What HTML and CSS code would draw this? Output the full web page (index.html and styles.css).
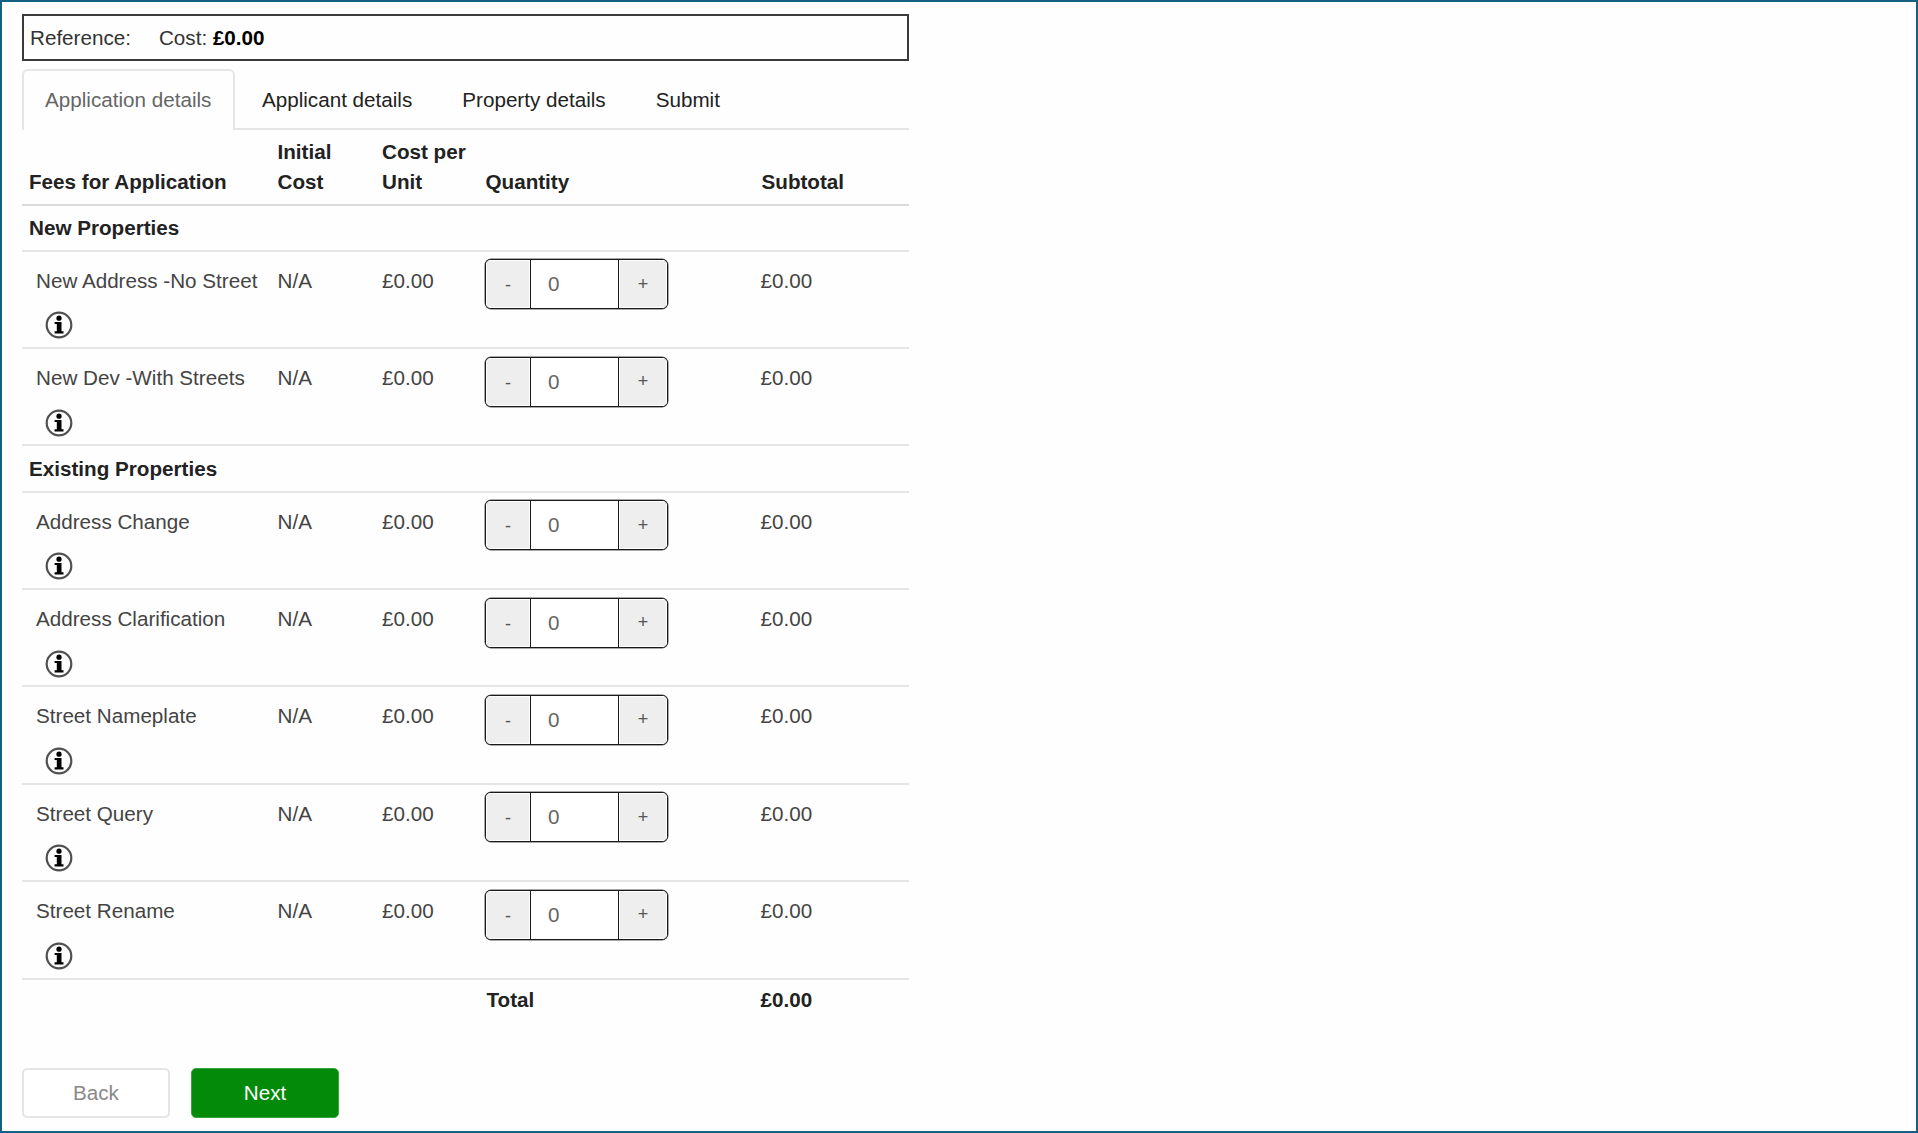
FILE: index.html
```html
<!DOCTYPE html>
<html lang="en">
<head>
  <meta charset="UTF-8" />
  <meta name="viewport" content="width=device-width, initial-scale=1.0" />
  <title>Application details</title>
  <link rel="stylesheet" href="styles.css">
</head>
<body>
  <div class="page">
    <div class="summary">
      <span class="reference">Reference:</span>
      <span>Cost: <strong>£0.00</strong></span>
    </div>

    <nav class="tabs">
      <a class="tab active">Application details</a>
      <a class="tab">Applicant details</a>
      <a class="tab">Property details</a>
      <a class="tab">Submit</a>
    </nav>

    <div class="fees">
      <div class="row head">
        <div>Fees for Application</div>
        <div>Initial<br>Cost</div>
        <div>Cost per<br>Unit</div>
        <div>Quantity</div>
        <div class="subtotal">Subtotal</div>
      </div>
      <div class="group">New Properties</div>
      <div id="newRows"></div>
      <div class="group">Existing Properties</div>
      <div id="existingRows"></div>
      <div class="row total">
        <div></div>
        <div></div>
        <div></div>
        <div class="label">Total</div>
        <div>£0.00</div>
      </div>
    </div>

    <div class="buttons">
      <button class="btn back">Back</button>
      <button class="btn next">Next</button>
    </div>
  </div>

  <script>
    const newItems = ['New Address -No Street', 'New Dev -With Streets'];
    const existingItems = ['Address Change', 'Address Clarification', 'Street Nameplate', 'Street Query', 'Street Rename'];

    function feeRow(name) {
      return `
        <div class="row item">
          <div class="name">
            ${name}
            <svg class="info" viewBox="0 0 28 28">
              <circle cx="14" cy="14" r="12.3" fill="none" stroke="#505050" stroke-width="2.2" />
              <circle cx="14" cy="7.2" r="2.6" />
              <path d="M9.6 10.9h6.9v9.3h2v2.2H9.6v-2.2h2.2v-7.1H9.6z" />
            </svg>
          </div>
          <div>N/A</div>
          <div>£0.00</div>
          <div class="stepper">
            <button class="minus">-</button>
            <input type="text" value="0">
            <button class="plus">+</button>
          </div>
          <div>£0.00</div>
        </div>`;
    }

    document.getElementById('newRows').innerHTML = newItems.map(feeRow).join('');
    document.getElementById('existingRows').innerHTML = existingItems.map(feeRow).join('');
  </script>
</body>
</html>
```
FILE: styles.css
```css
* {
  box-sizing: border-box;
}

body {
  margin: 0;
  font-family: Arial, 'Liberation Sans', sans-serif;
  font-size: 20.65px;
  line-height: 30px;
  color: #444;
}

button,
input {
  font-family: inherit;
  font-size: inherit;
  margin: 0;
}

.page {
  height: 1133px;
  border: 2px solid #156082;
  background: #fefefe;
  padding: 12px 20px 0;
}

.summary,
.tabs,
.fees {
  width: 887px;
}

.summary {
  display: flex;
  gap: 28px;
  height: 47px;
  padding: 7px 6px 0;
  border: 2px solid #3a3a3a;
  color: #333;
}

.summary strong {
  color: #000;
}

.tabs {
  display: flex;
  gap: 3px;
  height: 61px;
  margin-top: 8px;
  border-bottom: 2px solid #e5e5e5;
}

.tab {
  height: 61px;
  padding: 14px 21.5px 0;
  border: 2px solid transparent;
  border-bottom: 0;
  color: #222;
}

.tab.active {
  background: #fefefe;
  border-color: #e5e5e5;
  border-radius: 6px 6px 0 0;
  padding: 14px 22.1px 0 21px;
  color: #666;
}

.row {
  display: grid;
  grid-template-columns: 255.5px 104.5px 103.5px 275px 1fr;
  border-bottom: 2px solid #e5e5e5;
}

.head {
  height: 75.5px;
  padding-top: 6.5px;
  align-items: end;
  padding-bottom: 7px;
  border-bottom-color: #dadada;
  font-weight: bold;
  color: #222;
}

.head > div:first-child {
  padding-left: 7px;
}

.head .subtotal {
  padding-left: 1px;
}

.group {
  height: 46.2px;
  padding: 7.5px 7px 0;
  border-bottom: 2px solid #e5e5e5;
  font-weight: bold;
  color: #222;
}

.item {
  height: 97.4px;
  padding-top: 14px;
}

.name {
  padding-left: 14px;
}

.info {
  display: block;
  width: 28px;
  height: 28px;
  margin: 15.5px 0 0 8.5px;
}

.stepper {
  display: flex;
  width: 183px;
  height: 50px;
  margin: -6.5px 0 0 -0.5px;
  border: 1.5px solid #1a1a1a;
  border-radius: 6px;
  overflow: hidden;
  background: #fff;
  box-shadow: 0 0 0 0.5px #555;
}

.stepper button {
  border: 1px solid #fff;
  background: #eee;
  font-size: 18px;
  color: #555;
  padding: 0;
}

.stepper .minus {
  width: 44px;
  padding-top: 3px;
}

.plus {
  flex: 1;
}

.stepper input {
  width: 89px;
  padding: 0 0 0 17px;
  border: 0 solid #1a1a1a;
  border-width: 0 1px;
  color: #666;
}

.total {
  border-bottom: 0;
  padding-top: 5.2px;
  height: 88.3px;
  font-weight: bold;
  color: #222;
}

.total .label {
  padding-left: 1px;
}

.buttons {
  display: flex;
  gap: 21px;
}

.btn {
  width: 148px;
  height: 50px;
  border-radius: 5px;
}

.back {
  background: #fff;
  border: 2px solid #e5e5e5;
  color: #888;
}

.next {
  background: #028a08;
  border: 1px solid #3aa33f;
  color: #fff;
}
```
